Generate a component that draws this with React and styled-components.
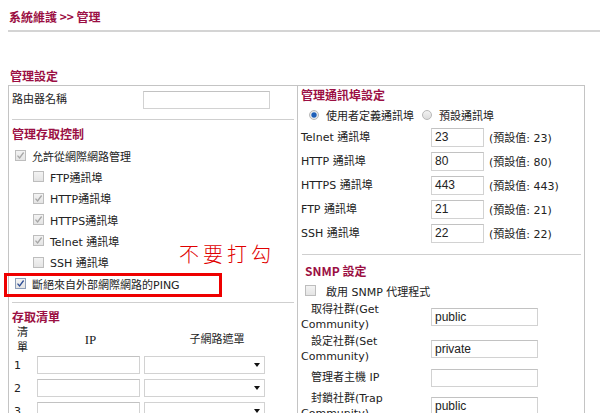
import React from "react";
import styled, { createGlobalStyle } from "styled-components";

const GlobalStyle = createGlobalStyle`
  html, body {
    margin: 0;
    padding: 0;
    background: #ffffff;
  }
  body {
    font-family: "DejaVu Sans", "Noto Sans CJK TC", sans-serif;
    font-size: 11px;
    color: #222;
    overflow: hidden;
  }
`;

const maroon = "#9b0f43";

const Page = styled.div`
  width: 600px;
  height: 413px;
  overflow: hidden;
  position: relative;
`;

const Breadcrumb = styled.div`
  margin: 0 0 0 8px;
  padding: 10px 0 6px 1px;
  height: 14px;
  line-height: 14px;
  border-bottom: 2px solid #d4d4d4;
  color: ${maroon};
  font-weight: bold;
  font-size: 12px;
  font-family: "Noto Sans CJK TC", "DejaVu Sans", sans-serif;
`;

const PageTitle = styled.div`
  margin: 35px 0 0 10px;
  height: 18px;
  line-height: 18px;
  color: ${maroon};
  font-weight: bold;
  font-size: 12px;
  font-family: "Noto Sans CJK TC", "DejaVu Sans", sans-serif;
`;

const Panel = styled.div`
  margin-left: 8px;
  width: 575px;
  border: 1px solid #c4c4c4;
  border-bottom: none;
  display: grid;
  grid-template-columns: 288px 1fr;
  height: 340px;
`;

const Column = styled.div`
  display: flex;
  flex-direction: column;
  padding: 0 ${(p) => p.$padRight || 0}px 0 ${(p) => p.$padLeft || 0}px;
  border-left: ${(p) => (p.$divider ? "1px solid #c4c4c4" : "none")};
  position: relative;
`;

const Divider = styled.div`
  height: 1px;
  flex-shrink: 0;
  background: #cfcfcf;
  margin: ${(p) => p.$m || "6px 3px 0 3px"};
`;

const SectionLabel = styled.div`
  height: 18px;
  line-height: 18px;
  flex-shrink: 0;
  color: ${maroon};
  font-weight: bold;
  font-size: 12px;
  font-family: "Noto Sans CJK TC", "DejaVu Sans", sans-serif;
  margin: ${(p) => p.$m || "0"};
`;

const NameRow = styled.div`
  display: flex;
  align-items: center;
  height: 27px;
  padding-left: 3px;
`;

const Label = styled.span`
  width: ${(p) => p.$w}px;
  flex-shrink: 0;
  white-space: nowrap;
  text-indent: ${(p) => p.$indent || 0}px;
  line-height: 15px;
`;

const TextInput = styled.div`
  box-sizing: border-box;
  width: ${(p) => p.$w}px;
  height: ${(p) => p.$h || 18}px;
  border: 1px solid #d2d2d2;
  border-top-color: #c2c2c2;
  background: #fff;
  font-family: "Liberation Sans", Arial, sans-serif;
  font-size: 12px;
  line-height: ${(p) => (p.$h || 18) - 2}px;
  padding-left: 3px;
  color: #222;
  flex-shrink: 0;
`;

const CheckRow = styled.div`
  display: flex;
  align-items: center;
  flex-shrink: 0;
  height: ${(p) => p.$h || 21.3}px;
  padding-left: ${(p) => p.$indent}px;
  gap: ${(p) => p.$gap || 6}px;
  white-space: nowrap;
`;

const Box = styled.span`
  box-sizing: border-box;
  width: 11px;
  height: 11px;
  border: 1px solid ${(p) => (p.$active ? "#8c9db8" : "#bdbdbd")};
  background: linear-gradient(#f3f3f3, #e4e4e4);
  display: inline-flex;
  align-items: center;
  justify-content: center;
  flex-shrink: 0;
`;

const Check = ({ checked, active }) => (
  <Box $active={active}>
    {checked && (
      <svg width="9" height="9" viewBox="0 0 9 9">
        <path
          d="M1.5 4.6 L3.6 7 L7.6 1.5"
          fill="none"
          stroke={active ? "#2f4f96" : "#a6a6a6"}
          strokeWidth="1.3"
        />
      </svg>
    )}
  </Box>
);

const RadioDot = styled.span`
  box-sizing: border-box;
  width: 10px;
  height: 10px;
  border-radius: 50%;
  border: 1px solid #b8b8b8;
  background: ${(p) =>
    p.$on
      ? "radial-gradient(circle, #1f5fb8 0 2.2px, #9fbce0 2.8px, #e9e9e9 3.3px)"
      : "linear-gradient(#f2f2f2, #dcdcdc)"};
  flex-shrink: 0;
`;

const PingWrap = styled.div`
  position: relative;
  flex-shrink: 0;
`;

const RedFrame = styled.div`
  position: absolute;
  left: -5px;
  top: 0px;
  width: 212px;
  height: 18px;
  border: 3px solid #ee0000;
  pointer-events: none;
`;

const Note = styled.div`
  position: absolute;
  left: 170px;
  top: 156px;
  color: #e00000;
  font-family: "Noto Sans CJK TC", serif;
  font-weight: 300;
  font-size: 20px;
  letter-spacing: 4px;
  line-height: 24px;
`;

const AclGrid = styled.div`
  display: grid;
  grid-template-columns: 25px 107px 124px;
  align-items: center;
  padding-left: 3px;
`;

const AclHead = styled.div`
  height: 28px;
  display: flex;
  align-items: center;
  justify-content: ${(p) => p.$align || "center"};
  line-height: 15px;
  font-family: ${(p) => (p.$serif ? '"Liberation Serif", serif' : "inherit")};
  font-size: ${(p) => (p.$serif ? "13px" : "11px")};
  padding-left: ${(p) => p.$pl || 0}px;
`;

const AclCell = styled.div`
  height: 23px;
  display: flex;
  align-items: center;
  padding-left: ${(p) => p.$pl || 0}px;
`;

const Select = styled.div`
  box-sizing: border-box;
  width: 121px;
  height: 18px;
  border: 1px solid #d2d2d2;
  background: #fff;
  display: flex;
  align-items: center;
  justify-content: flex-end;
  padding-right: 4px;
`;

const Arrow = styled.span`
  width: 0;
  height: 0;
  border-left: 3.5px solid transparent;
  border-right: 3.5px solid transparent;
  border-top: 4px solid #111;
`;

const RadioRow = styled.div`
  display: flex;
  align-items: center;
  height: 20px;
  padding-left: 8px;
  white-space: nowrap;
`;

const RadioItem = styled.span`
  display: inline-flex;
  align-items: center;
  gap: 7px;
  margin-right: ${(p) => p.$mr || 0}px;
`;

const PortRow = styled.div`
  display: flex;
  align-items: center;
  height: 24px;
`;

const Hint = styled.span`
  margin-left: 5px;
  white-space: nowrap;
`;

const SnmpRow = styled.div`
  display: flex;
  align-items: center;
  flex-shrink: 0;
  height: ${(p) => p.$h}px;
`;

const ports = [
  ["Telnet 通訊埠", "23"],
  ["HTTP 通訊埠", "80"],
  ["HTTPS 通訊埠", "443"],
  ["FTP 通訊埠", "21"],
  ["SSH 通訊埠", "22"],
];

const services = [
  ["FTP通訊埠", false],
  ["HTTP通訊埠", true],
  ["HTTPS通訊埠", true],
  ["Telnet 通訊埠", true],
  ["SSH 通訊埠", false],
];

const App = () => {
  return (
    <Page>
      <GlobalStyle />
      <Breadcrumb>系統維護 &gt;&gt; 管理</Breadcrumb>
      <PageTitle>管理設定</PageTitle>
      <Panel>
        <Column>
          <NameRow>
            <Label $w={131}>路由器名稱</Label>
            <TextInput $w={127} />
          </NameRow>
          <Divider />
          <SectionLabel $m="5px 0 2px 3px">管理存取控制</SectionLabel>
          <CheckRow $indent={6}>
            <Check checked />
            允許從網際網路管理
          </CheckRow>
          {services.map(([name, on]) => (
            <CheckRow key={name} $indent={24}>
              <Check checked={on} />
              {name}
            </CheckRow>
          ))}
          <PingWrap>
            <CheckRow $indent={6} $h={22}>
              <Check checked active />
              斷絕來自外部網際網路的PING
            </CheckRow>
            <RedFrame />
          </PingWrap>
          <Note>不要打勾</Note>
          <Divider $m="7px 3px 0 3px" />
          <SectionLabel $m="5px 0 0 3px">存取清單</SectionLabel>
          <AclGrid>
            <AclHead $align="flex-start" $pl={5}>
              清<br />單
            </AclHead>
            <AclHead $serif>IP</AclHead>
            <AclHead $pl={22}>子網路遮罩</AclHead>
            {[1, 2, 3].map((n) => (
              <React.Fragment key={n}>
                <AclCell $pl={2}>{n}</AclCell>
                <AclCell>
                  <TextInput $w={103} />
                </AclCell>
                <AclCell>
                  <Select>
                    <Arrow />
                  </Select>
                </AclCell>
              </React.Fragment>
            ))}
          </AclGrid>
        </Column>
        <Column $divider $padLeft={3}>
          <SectionLabel $m="0 0 1px 0">管理通訊埠設定</SectionLabel>
          <RadioRow>
            <RadioItem $mr={8}>
              <RadioDot $on />
              使用者定義通訊埠
            </RadioItem>
            <RadioItem>
              <RadioDot />
              預設通訊埠
            </RadioItem>
          </RadioRow>
          {ports.map(([name, val]) => (
            <PortRow key={name}>
              <Label $w={130}>{name}</Label>
              <TextInput $w={53} $h={19}>
                {val}
              </TextInput>
              <Hint>(預設值: {val})</Hint>
            </PortRow>
          ))}
          <Divider $m="9px 3px 0 1px" />
          <SectionLabel $m="7px 0 0 4px">SNMP 設定</SectionLabel>
          <CheckRow $indent={4} $gap={10} $h={21}>
            <Check />
            啟用 SNMP 代理程式
          </CheckRow>
          <SnmpRow $h={32}>
            <Label $w={130} $indent={10}>
              取得社群(Get
              <br />
              Community)
            </Label>
            <TextInput $w={107}>public</TextInput>
          </SnmpRow>
          <SnmpRow $h={32}>
            <Label $w={130} $indent={10}>
              設定社群(Set
              <br />
              Community)
            </Label>
            <TextInput $w={107}>private</TextInput>
          </SnmpRow>
          <SnmpRow $h={25}>
            <Label $w={130} $indent={10}>
              管理者主機 IP
            </Label>
            <TextInput $w={107} />
          </SnmpRow>
          <SnmpRow $h={32}>
            <Label $w={130} $indent={10}>
              封鎖社群(Trap
              <br />
              Community)
            </Label>
            <TextInput $w={107}>public</TextInput>
          </SnmpRow>
        </Column>
      </Panel>
    </Page>
  );
};

export default App;
